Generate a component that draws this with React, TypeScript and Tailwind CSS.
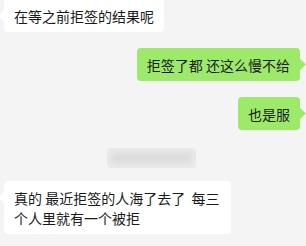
import React from "react";

const font = { fontFamily: '"Noto Sans CJK SC", "Noto Sans", sans-serif' };

function Left({ children }: { children: React.ReactNode }) {
  return (
    <div className="flex justify-start pl-1">
      <div className="relative max-w-[227px] rounded bg-white px-[10px] py-[6.5px] text-[14px] leading-[20px] text-[#1a1a1a]">
        <span className="absolute -left-[4px] top-[12px] h-[9px] w-[9px] rotate-45 bg-white" />
        <span className="relative">{children}</span>
      </div>
    </div>
  );
}

function Right({ children }: { children: React.ReactNode }) {
  return (
    <div className="flex justify-end pr-[6px]">
      <div className="relative max-w-[227px] rounded bg-[#9dea6a] px-[10px] py-[6.5px] text-[14px] leading-[20px] text-[#1a1a1a]">
        <span className="absolute -right-[4px] top-[12px] h-[9px] w-[9px] rotate-45 bg-[#9dea6a]" />
        <span className="relative">{children}</span>
      </div>
    </div>
  );
}

export default function App() {
  return (
    <div className="h-[246px] w-[306px] overflow-hidden bg-[#f4f4f4]" style={font}>
      <div className="flex flex-col">
        <div className="-mt-[1px]">
          <Left>在等之前拒签的结果呢</Left>
        </div>
        <div className="mt-[16px]">
          <Right>拒签了都 还这么慢不给</Right>
        </div>
        <div className="mt-[16px]">
          <Right>也是服</Right>
        </div>
        <div className="mt-[18px] flex justify-center pr-[4px]">
          <div className="relative h-[20px] w-[89px] rounded bg-[#e9e9e9]">
            <div className="absolute left-[4px] right-[4px] top-[5px] h-[10px] rounded-sm bg-[#dcdcdc] blur-[2px]" />
          </div>
        </div>
        <div className="mt-[13px]">
          <Left>真的 最近拒签的人海了去了&nbsp; 每三个人里就有一个被拒</Left>
        </div>
      </div>
    </div>
  );
}
